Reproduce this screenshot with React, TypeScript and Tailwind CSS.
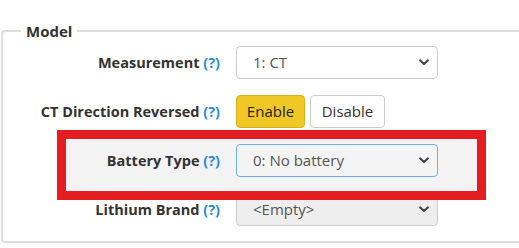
const FONT = "font-['Open_Sans','Liberation_Sans',sans-serif]"

function Chevron() {
  return (
    <svg width="10" height="7" viewBox="0 0 10 7" className="shrink-0">
      <path d="M1.2 1.5 L5 5 L8.8 1.5" fill="none" stroke="#444" strokeWidth="2.2" strokeLinecap="round" strokeLinejoin="round" />
    </svg>
  )
}

function Select({ value, tone = 'normal' }: { value: string; tone?: 'normal' | 'focus' | 'disabled' }) {
  const box =
    tone === 'focus'
      ? 'border-[#6cb2ea] bg-[#f4f4f4]'
      : tone === 'disabled'
        ? 'border-[#cccccc] bg-[#eeeeee]'
        : 'border-[#cccccc] bg-white'
  return (
    <div className={`ml-4 flex h-[33px] w-[202px] items-center justify-between rounded-[4px] border pl-4 pr-[8px] ${box}`}>
      <span className="text-[15px] text-[#555]">{value}</span>
      <Chevron />
    </div>
  )
}

function Label({ text }: { text: string }) {
  return (
    <div className="w-[217px] text-right text-[14.5px] font-bold text-[#333]">
      {text} <span className="text-[#2a8bd8]">(?)</span>
    </div>
  )
}

export default function App() {
  return (
    <div className={`h-[248px] w-[519px] overflow-hidden bg-white ${FONT}`}>
      <fieldset className="mt-[21px] ml-[1px] w-[560px] rounded-[4px] border-2 border-[#dddddd] pt-[5px] pb-[15px]">
        <legend className="ml-[18px] px-[5px] text-[15px] leading-[20px] font-bold text-[#333]">Model</legend>
        <div className="flex flex-col gap-4">
          <div className="flex h-[33px] items-center">
            <Label text="Measurement" />
            <Select value="1: CT" />
          </div>

          <div className="flex h-[33px] items-center">
            <Label text="CT Direction Reversed" />
            <div className="ml-4 flex gap-[5px]">
              <button className="h-[33px] w-[69px] rounded-[4px] border border-[#d8b21c] bg-[#efc826] text-[15px] text-[#222]">
                Enable
              </button>
              <button className="h-[33px] w-[75px] rounded-[4px] border border-[#cccccc] bg-white text-[15px] text-[#333]">
                Disable
              </button>
            </div>
          </div>

          <div className="relative z-0 flex h-[33px] items-center">
            <div className="absolute top-[-14px] left-[54px] -z-10 h-[70px] w-[429px] border-[9px] border-[#e41e20] bg-[#f3f3f3]" />
            <Label text="Battery Type" />
            <Select value="0: No battery" tone="focus" />
          </div>

          <div className="flex h-[33px] items-center">
            <Label text="Lithium Brand" />
            <Select value="<Empty>" tone="disabled" />
          </div>
        </div>
      </fieldset>
    </div>
  )
}
